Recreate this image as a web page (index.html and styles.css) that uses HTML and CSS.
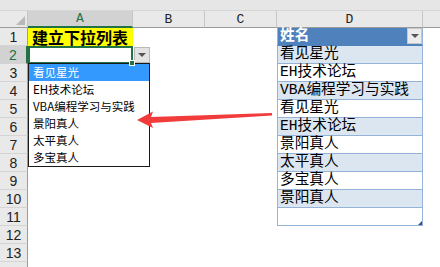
FILE: index.html
```html
<!DOCTYPE html>
<html lang="zh-CN">
<head>
<meta charset="utf-8">
<title>建立下拉列表</title>
<link rel="stylesheet" href="styles.css">
</head>
<body>
<div class="sheet">
  <div class="topbar"></div>

  <div class="corner"></div>
  <div class="ch sel">A</div>
  <div class="ch">B</div>
  <div class="ch">C</div>
  <div class="ch">D</div>
  <div class="ch last"></div>

  <div class="rh">1</div>
  <div class="cell a1">建立下拉列表</div>
  <div class="cell"></div><div class="cell"></div>
  <div class="cell t th">姓名<span class="tbtn"><span class="tri"></span></span></div>
  <div class="cell"></div>

  <div class="rh sel">2</div>
  <div class="cell active">
    <span class="ddbtn"><span class="tri"></span></span>
    <ul class="ddlist">
      <li class="hl">看见星光</li>
      <li>EH技术论坛</li>
      <li>VBA编程学习与实践</li>
      <li>景阳真人</li>
      <li>太平真人</li>
      <li>多宝真人</li>
    </ul>
  </div>
  <div class="cell"></div><div class="cell"></div>
  <div class="cell t band">看见星光</div>
  <div class="cell"></div>

  <div class="rh">3</div>
  <div class="cell"></div><div class="cell"></div><div class="cell"></div>
  <div class="cell t">EH技术论坛</div>
  <div class="cell"></div>

  <div class="rh">4</div>
  <div class="cell"></div><div class="cell"></div><div class="cell"></div>
  <div class="cell t band">VBA编程学习与实践</div>
  <div class="cell"></div>

  <div class="rh">5</div>
  <div class="cell"></div><div class="cell"></div><div class="cell"></div>
  <div class="cell t">看见星光</div>
  <div class="cell"></div>

  <div class="rh">6</div>
  <div class="cell"></div><div class="cell"></div><div class="cell"></div>
  <div class="cell t band">EH技术论坛</div>
  <div class="cell"></div>

  <div class="rh">7</div>
  <div class="cell"></div><div class="cell"></div><div class="cell"></div>
  <div class="cell t">景阳真人</div>
  <div class="cell"></div>

  <div class="rh">8</div>
  <div class="cell"></div><div class="cell"></div><div class="cell"></div>
  <div class="cell t band">太平真人</div>
  <div class="cell"></div>

  <div class="rh">9</div>
  <div class="cell"></div><div class="cell"></div><div class="cell"></div>
  <div class="cell t">多宝真人</div>
  <div class="cell"></div>

  <div class="rh">10</div>
  <div class="cell"></div><div class="cell"></div><div class="cell"></div>
  <div class="cell t band">景阳真人</div>
  <div class="cell"></div>

  <div class="rh">11</div>
  <div class="cell"></div><div class="cell"></div><div class="cell"></div>
  <div class="cell t tend"></div>
  <div class="cell"></div>

  <div class="rh">12</div>
  <div class="cell"></div><div class="cell"></div><div class="cell"></div><div class="cell"></div><div class="cell"></div>

  <div class="rh">13</div>
  <div class="cell"></div><div class="cell"></div><div class="cell"></div><div class="cell"></div><div class="cell"></div>

  <div class="rh"></div>
  <div class="cell"></div><div class="cell"></div><div class="cell"></div><div class="cell"></div><div class="cell"></div>

  <svg class="arrow" width="440" height="267" viewBox="0 0 440 267">
    <polygon points="137,120 153,111.5 151,117 272,113 272,115.5 151,123 153,128" fill="#f23b3b"/>
  </svg>
</div>
</body>
</html>
```

FILE: styles.css
```css
html, body {
  margin: 0;
  padding: 0;
  background: #ffffff;
  overflow: hidden;
}

.sheet {
  position: relative;
  width: 440px;
  height: 267px;
  display: grid;
  grid-template-columns: 28px 105px 72px 72px 146px 1fr;
  grid-template-rows: 11px 17px;
  grid-auto-rows: 18px;
  overflow: hidden;
  font-family: "Noto Sans CJK SC", sans-serif;
}

.topbar {
  grid-column: 1 / -1;
  background: #e6e6e6;
  border-bottom: 1px solid #d6d6d6;
  box-sizing: border-box;
}

.corner {
  position: relative;
  background: #e9e9e9;
  border-right: 1px solid #c6c6c6;
  border-bottom: 1px solid #9b9b9b;
  box-sizing: border-box;
}

.corner::after {
  content: "";
  position: absolute;
  right: 2px;
  bottom: 2px;
  width: 9px;
  height: 9px;
  background: #b9b9b9;
  clip-path: polygon(100% 0, 100% 100%, 0 100%);
}

.ch {
  background: #e9e9e9;
  border-right: 1px solid #c6c6c6;
  border-bottom: 1px solid #9b9b9b;
  box-sizing: border-box;
  display: flex;
  align-items: center;
  justify-content: center;
  font-family: "Liberation Mono", monospace;
  font-size: 13px;
  color: #222222;
}

.ch.sel {
  background: #d2d2d2;
  color: #217346;
  border-bottom: 2px solid #217346;
}

.ch.last {
  border-right: none;
}

.rh {
  background: #e9e9e9;
  border-right: 1px solid #9b9b9b;
  border-bottom: 1px solid #d4d4d4;
  box-sizing: border-box;
  display: flex;
  align-items: center;
  justify-content: center;
  font-family: "Liberation Sans", sans-serif;
  font-size: 14px;
  color: #222222;
}

.rh.sel {
  background: #d2d2d2;
  color: #217346;
  border-right: 2px solid #217346;
}

.cell {
  box-sizing: border-box;
  background: #ffffff;
}

.a1 {
  background: #ffff00;
  font-weight: bold;
  font-size: 16px;
  line-height: 18px;
  padding-left: 4px;
  color: #000000;
  white-space: nowrap;
}

.active {
  position: relative;
  border: 2px solid #217346;
  z-index: 2;
}

.active::after {
  content: "";
  position: absolute;
  right: -4px;
  bottom: -4px;
  width: 4px;
  height: 4px;
  background: #217346;
  border: 1px solid #ffffff;
}

.ddbtn {
  position: absolute;
  left: 104px;
  top: -1px;
  width: 16px;
  height: 16px;
  box-sizing: border-box;
  background: #e3e3e3;
  border: 1px solid #b8b8b8;
  display: flex;
  align-items: center;
  justify-content: center;
}

.tri {
  width: 0;
  height: 0;
  border-left: 4px solid transparent;
  border-right: 4px solid transparent;
  border-top: 4px solid #555555;
}

.ddlist {
  position: absolute;
  left: -2px;
  top: 15px;
  width: 122px;
  height: 104px;
  box-sizing: border-box;
  margin: 0;
  padding: 0;
  list-style: none;
  background: #ffffff;
  border: 1px solid #1a1a1a;
  font-family: "Noto Sans CJK SC", sans-serif;
  font-size: 11.5px;
  color: #000000;
}

.ddlist li {
  height: 17px;
  line-height: 17px;
  padding-left: 4px;
  white-space: nowrap;
}

.ddlist li.hl {
  background: #3399ff;
  color: #ffffff;
}

.t {
  position: relative;
  border-left: 1px solid #95b3d7;
  border-right: 1px solid #95b3d7;
  border-bottom: 1px solid #95b3d7;
  padding-left: 2px;
  font-family: "Liberation Mono", "Noto Sans CJK SC", monospace;
  font-size: 14.67px;
  line-height: 17px;
  color: #000000;
  white-space: nowrap;
}

.th {
  background: #4f81bd;
  color: #ffffff;
  font-weight: bold;
  border-bottom-color: #4f81bd;
}

.band {
  background: #dce6f1;
}

.tbtn {
  position: absolute;
  right: 0;
  top: 0;
  width: 15px;
  height: 16px;
  box-sizing: border-box;
  background: #ececec;
  border: 1px solid #c8c8c8;
  display: flex;
  align-items: center;
  justify-content: center;
}

.tend::after {
  content: "";
  position: absolute;
  right: 0;
  bottom: 0;
  width: 4px;
  height: 4px;
  background: #2f4f8f;
  clip-path: polygon(100% 0, 100% 100%, 0 100%);
}

.arrow {
  position: absolute;
  left: 0;
  top: 0;
  pointer-events: none;
  z-index: 5;
}
```
